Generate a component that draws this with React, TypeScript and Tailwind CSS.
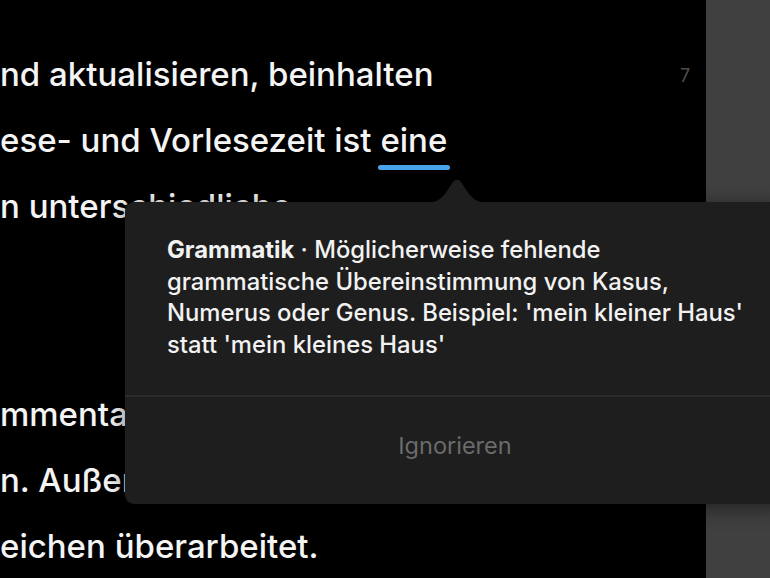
import React from "react";

export default function App() {
  const font = { fontFamily: "Inter, 'Noto Sans', sans-serif" };
  return (
    <div className="relative flex h-[578px] w-[770px] overflow-hidden bg-black" style={font}>
      <div className="relative flex-1 pt-[41px]">
        <div className="text-[33px] leading-[66px] text-[#f4f4f4] whitespace-nowrap font-[480]">
          <div>nd aktualisieren, beinhalten</div>
          <div>
            <span>ese- und Vorlesezeit ist </span>
            <span className="relative inline-block">
              eine
              <span className="absolute left-[-2px] right-[-3px] bottom-[3px] h-[5px] rounded-full bg-[#4aa3ea]" />
            </span>
          </div>
          <div>n unterschiedliche</div>
          <div className="h-[66px]" />
          <div className="h-[66px]" />
          <div className="mt-[10px]">mmentar und so weiter</div>
          <div>n. Außerdem wurde</div>
          <div>eichen überarbeitet.</div>
        </div>
        <div className="absolute left-[680px] top-[62px] text-[18px] text-[#4d4d4d]">7</div>
      </div>
      <div className="w-[64px] bg-[#404040]" />

      {/* popover */}
      <div className="absolute left-[125px] top-[178px] w-[664px]">
        <div className="relative h-[24px]">
          <svg className="absolute left-[292px] top-0" width="80" height="25" viewBox="0 0 80 25">
            <path d="M0 25 C 18 25 22 24 30 13 L 36 4 C 38 1 42 1 44 4 L 50 13 C 58 24 62 25 80 25 Z" fill="#1e1e1e" />
          </svg>
        </div>
        <div className="rounded-[9px] bg-[#1e1e1e] shadow-[0_4px_20px_rgba(0,0,0,0.5)]">
          <div className="px-[42px] pt-[32px] pb-[34px] text-[23.8px] leading-[31.7px] text-[#f2f2f2] whitespace-nowrap font-[460]">
            <span className="font-bold">Grammatik</span> · Möglicherweise fehlende
            <br />
            grammatische Übereinstimmung von Kasus,
            <br />
            Numerus oder Genus. Beispiel: 'mein kleiner Haus'
            <br />
            statt 'mein kleines Haus'
          </div>
          <div className="h-[2px] bg-[#2b2b2b]" />
          <div className="flex h-[107px] items-center justify-center pr-[4px] pb-[10px] text-[23.5px] text-[#6b6b6b]">
            Ignorieren
          </div>
        </div>
      </div>
    </div>
  );
}
